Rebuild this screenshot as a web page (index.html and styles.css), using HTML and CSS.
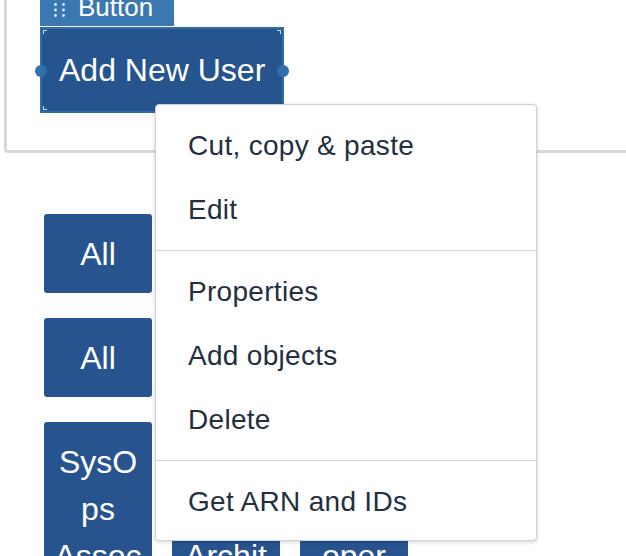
FILE: index.html
```html
<!DOCTYPE html>
<html lang="en">
<head>
  <meta charset="UTF-8">
  <meta name="viewport" content="width=device-width, initial-scale=1.0">
  <title>Canvas editor</title>
  <link rel="stylesheet" href="styles.css">
</head>
<body>
  <div class="canvas">
    <!-- Selected component frame -->
    <div class="frame">
      <div class="tab">
        <svg class="grip" width="11" height="14" viewBox="0 0 11 14">
          <circle cx="1.5" cy="1.5" r="1.4"/><circle cx="9.5" cy="1.5" r="1.4"/>
          <circle cx="1.5" cy="7" r="1.4"/><circle cx="9.5" cy="7" r="1.4"/>
          <circle cx="1.5" cy="12.5" r="1.4"/><circle cx="9.5" cy="12.5" r="1.4"/>
        </svg>
        <span>Button</span>
      </div>
      <div class="selected">
        <button class="btn-main">Add New User</button>
        <span class="handle handle-left"></span>
        <span class="handle handle-right"></span>
      </div>
    </div>

    <!-- Filter buttons -->
    <div class="grid">
      <button class="tile">All</button>
      <button class="tile">IAM</button>
      <button class="tile">EC2</button>
      <button class="tile">VPC</button>
      <button class="tile">All</button>
      <button class="tile">Roles</button>
      <button class="tile">Policy</button>
      <button class="tile">Audit</button>
      <button class="tile">SysOps Associate</button>
      <button class="tile">Solutions Architect</button>
      <button class="tile">Cloud Developer</button>
    </div>

    <!-- Context menu -->
    <div class="menu">
      <ul class="menu-group">
        <li>Cut, copy &amp; paste</li>
        <li>Edit</li>
      </ul>
      <ul class="menu-group">
        <li>Properties</li>
        <li>Add objects</li>
        <li>Delete</li>
      </ul>
      <ul class="menu-group">
        <li>Get ARN and IDs</li>
      </ul>
    </div>
  </div>
</body>
</html>
```

FILE: styles.css
```css
body {
  margin: 0;
  background: #fff;
  font-family: 'Liberation Sans', Arial, sans-serif;
  overflow: hidden;
}
.canvas {
  position: relative;
  height: 556px;
  overflow: hidden;
}
.frame {
  margin-left: 4px;
  height: 150px;
  padding-left: 33px;
  border-left: 3px solid #d5d8dc;
  border-bottom: 3px solid #d5d8dc;
  border-bottom-left-radius: 4px;
}
.tab {
  display: inline-flex;
  align-items: flex-start;
  height: 26px;
  padding: 0 21px 0 14px;
  background: #3b78b1;
  color: #fff;
  font-size: 26px;
  line-height: 15px;
}
.grip {
  fill: #e6eef6;
  margin: 3px 13px 0 0;
}
.selected {
  position: relative;
  width: max-content;
  margin-top: 1px;
  border: 2px solid #2f6ea9;
  background: #26548f;
}
.selected::before {
  content: "";
  position: absolute;
  inset: 1px;
  background:
    linear-gradient(#fff, #fff) top left / 4px 1px no-repeat,
    linear-gradient(#fff, #fff) top left / 1px 4px no-repeat,
    linear-gradient(#fff, #fff) top right / 4px 1px no-repeat,
    linear-gradient(#fff, #fff) top right / 1px 4px no-repeat,
    linear-gradient(#fff, #fff) bottom left / 4px 1px no-repeat,
    linear-gradient(#fff, #fff) bottom left / 1px 4px no-repeat,
    linear-gradient(#fff, #fff) bottom right / 4px 1px no-repeat,
    linear-gradient(#fff, #fff) bottom right / 1px 4px no-repeat;
  opacity: 0.8;
  pointer-events: none;
}
.btn-main {
  display: block;
  height: 82px;
  padding: 0 17px;
  border: none;
  background: transparent;
  color: #fff;
  font-family: inherit;
  font-size: 32px;
}
.handle {
  position: absolute;
  top: 36px;
  width: 12px;
  height: 12px;
  border-radius: 50%;
  background: #2f70ad;
}
.handle-left {
  left: -7px;
}
.handle-right {
  right: -7px;
}
.grid {
  display: grid;
  grid-template-columns: repeat(4, 108px);
  gap: 25px 20px;
  align-items: start;
  margin: 61px 0 0 44px;
}
.tile {
  padding: 17px 9px 15px;
  border: none;
  border-radius: 3px;
  background: #27548f;
  color: #fff;
  font-family: inherit;
  font-size: 32px;
  line-height: 47px;
  overflow-wrap: anywhere;
  text-align: center;
}
.menu {
  position: absolute;
  left: 155px;
  top: 104px;
  width: 382px;
  box-sizing: border-box;
  background: #fff;
  border: 1px solid #cdd2d7;
  border-radius: 4px;
  box-shadow: 0 1px 4px rgba(0, 0, 0, 0.18);
}
.menu-group {
  list-style: none;
  margin: 0;
  padding: 9px 0 8px;
}
.menu-group + .menu-group {
  border-top: 1px solid #d5d8dc;
}
.menu-group:last-child {
  padding-bottom: 6px;
}
.menu-group li {
  padding: 0 32px;
  font-size: 28px;
  line-height: 64px;
  letter-spacing: 0.3px;
  color: #232f3e;
}
```
